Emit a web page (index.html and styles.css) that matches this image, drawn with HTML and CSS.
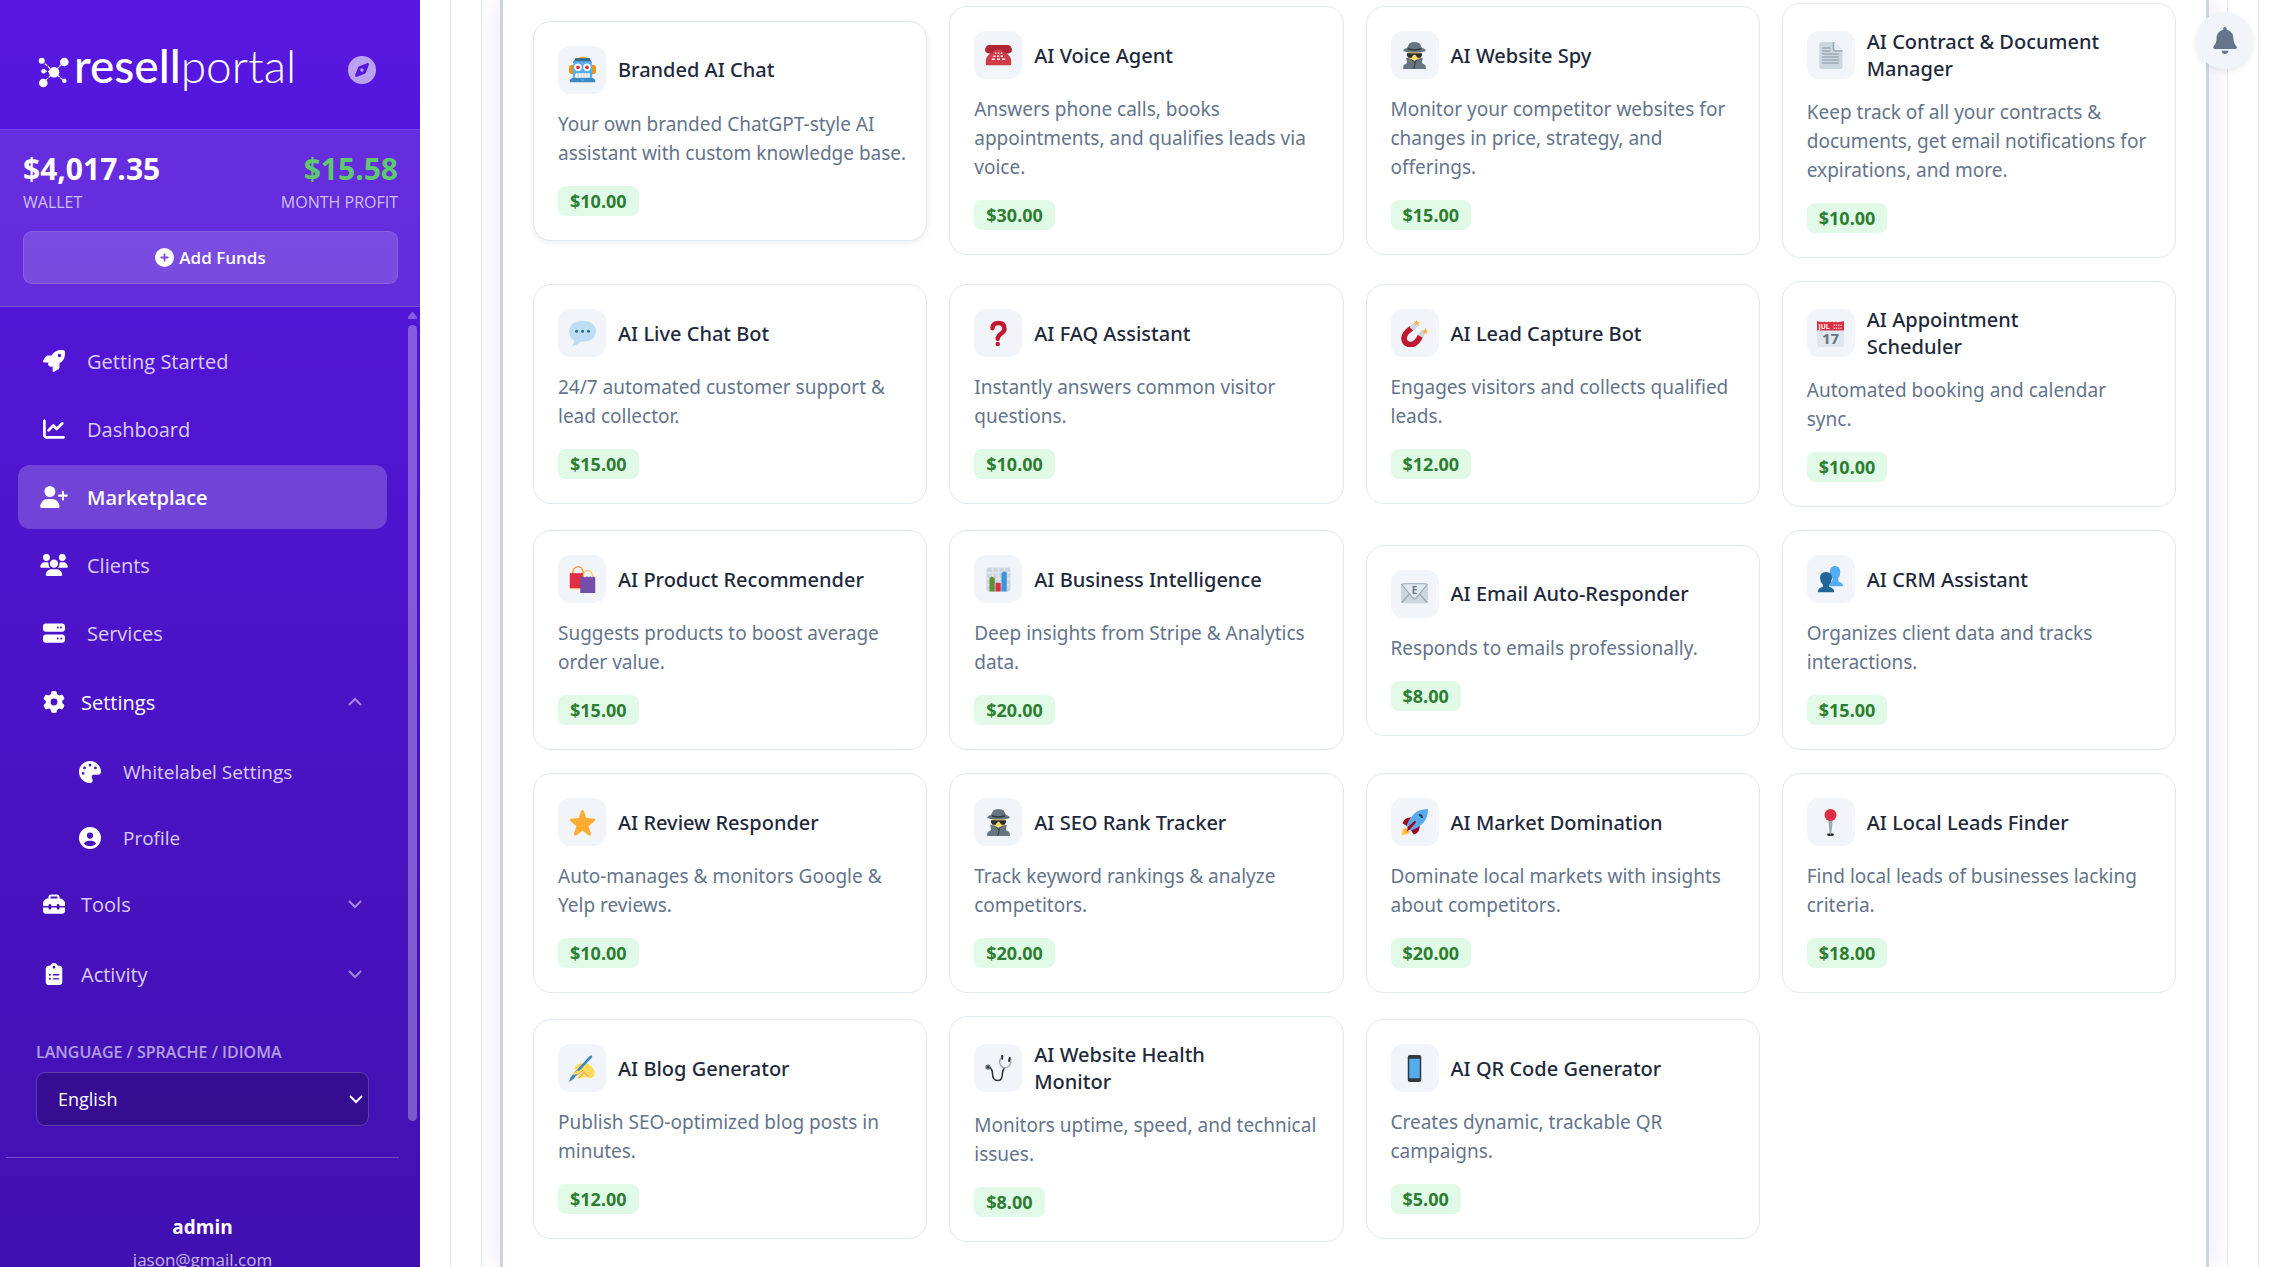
FILE: index.html
```
<!DOCTYPE html>
<html lang="en">
<head>
    <meta charset="UTF-8">
    <meta name="viewport" content="width=device-width, initial-scale=1.0">
    <title>Marketplace</title>
    <link rel="stylesheet" href="styles.css">
</head>
<body>

    <!-- emoji symbols used by the product cards -->
    <svg class="sprite" aria-hidden="true">
        <symbol id="e-robot" viewBox="0 0 36 36">
            <path fill="#f4900c" d="M1 13q-1 1-1 3v4q0 3 2 4h4V12H3zM35 13q1 1 1 3v4q0 3-2 4h-4V12h3z"/>
            <path fill="#ffac33" d="M8 7Q10 1 18 1t10 6z"/>
            <path fill="#66757f" d="M8 4h20l3 5H5z"/>
            <path fill="#55acee" d="M6 7h24l1 10v12H5V17z"/>
            <path fill="#3b88c3" d="M1 35v-2q1-4 6-4h22q5 0 6 4v2z"/>
            <path fill="#269" d="M8 3h20v3H8z"/>
            <circle cx="12" cy="15" r="5" fill="#fff"/><circle cx="24" cy="15" r="5" fill="#fff"/>
            <circle cx="12" cy="15" r="2.5" fill="#dd2e44"/><circle cx="24" cy="15" r="2.5" fill="#dd2e44"/>
            <rect x="8" y="23" width="20" height="6" rx="2" fill="#fff"/>
            <path stroke="#99aab5" d="M12 23v6M16 23v6M20 23v6M24 23v6"/>
            <path fill="#55acee" d="M15 31h6l-3 3z"/>
        </symbol>
        <symbol id="e-phone" viewBox="0 0 36 36">
            <path fill="#d03b48" d="M11 9h14q3 6 7 9 3 3 3 8v3q0 2-2 2H3q-2 0-2-2v-3q0-5 3-8 4-3 7-9z"/>
            <path fill="#b02634" d="M5 4h26q4 1 5 6 0 4-4 5-5 1-7-2-1-3-4-3h-6q-3 0-4 3-2 3-7 2-4-1-4-5Q1 5 5 4z"/>
            <path fill="#b02634" d="M12 6h2v6h-2zM22 6h2v6h-2z"/>
            <path fill="#fff" d="M13 14h2v2h-2zM17 14h2v2h-2zM21 14h2v2h-2zM11 18h3v2h-3zM16 18h3v2h-3zM21 18h3v2h-3zM9 22h4v2H9zM16 22h4v2h-4zM23 22h4v2h-4z"/>
        </symbol>
        <symbol id="e-spy" viewBox="0 0 36 36">
            <path fill="#ffdc5d" d="M9 10h18v9l-3 6H12l-3-6z"/>
            <path fill="#66757f" d="M3 36v-3q0-3 4-4l1-2-1-6q5 0 11 4 6-4 11-4l-1 6 1 2q4 1 4 4v3z"/>
            <path fill="none" stroke="#31373d" stroke-width="1.2" d="M15 24l4 4-2 8M21 24l-3 4"/>
            <path fill="#66757f" d="M3 12q0-3 5-4l3-6q2-2 7-2t7 2l3 6q5 1 5 4-5 2-15 2T3 12z"/>
            <path fill="#31373d" d="M9 8q9 3 18 0v2q-9 3-18 0z"/>
            <path fill="#292f33" d="M8 15h20v3l-2 3h-4l-3-4h-2l-3 4h-4l-2-3z"/>
        </symbol>
        <symbol id="e-page" viewBox="0 0 36 36">
            <path fill="#ccd6dd" d="M3 3q0-3 3-3h17l11 11v22q0 3-3 3H6q-3 0-3-3z"/>
            <path fill="#e8eef3" d="M22 0l12 12H24q-2 0-2-2z"/>
            <path stroke="#99aab5" stroke-width="2" d="M7 8h11M7 12h11M7 16h22M7 20h22M7 24h22M7 28h22M22 0v9q0 3 3 3h9" fill="none"/>
        </symbol>
        <symbol id="e-speech" viewBox="0 0 36 36">
            <path fill="#bdddf4" d="M18 1c10 0 18 5 18 14s-8 14-18 14l-3 0c-2 3-6 5-12 6 3-2 4-5 4-8-4-2-7-6-7-12C0 6 8 1 18 1z"/>
            <circle cx="10" cy="15" r="2" fill="#2a6797"/><circle cx="18" cy="15" r="2" fill="#2a6797"/><circle cx="26" cy="15" r="2" fill="#2a6797"/>
        </symbol>
        <symbol id="e-question" viewBox="0 0 36 36">
            <path fill="none" stroke="#be1931" stroke-width="6" stroke-linecap="round" d="M10 11q0-7 8-7 8 0 8 8c0 6-9 6-9 13"/>
            <circle cx="17" cy="32" r="3" fill="#be1931"/>
        </symbol>
        <symbol id="e-magnet" viewBox="0 0 36 36">
            <path fill="none" stroke="#be1931" stroke-width="7.5" d="M14 11q-9 6-10 13 0 8 9 9 8-1 13-12"/>
            <path fill="none" stroke="#ccd6dd" stroke-width="7" d="M14 12l6-6M26 22l4-7"/>
            <path fill="#ffac33" d="M21 0l1 3 3 0-2 2 1 3-3-2-2 1 0-3-2-2h3zM33 11l1 3h2l-2 2 1 3-3-2-2 2v-3l-2-2h3z"/>
        </symbol>
        <symbol id="e-bags" viewBox="0 0 36 36">
            <path fill="none" stroke="#f4900c" stroke-width="1.6" d="M5 11q0-10 7-10t7 10"/>
            <path fill="#dd2e44" d="M1 9l2 1 2-1 2 1 2-1 2 1 2-1 2 1 2-1 2 1v20H1z"/>
            <path fill="#ffcc4d" d="M1 30h14v1H1z"/>
            <path fill="none" stroke="#ffcc4d" stroke-width="1.6" d="M19 16q0-10 6-10t7 10"/>
            <path fill="#744eaa" d="M15 14l2 1 2-1 2 1 3-1 2 1 3-1 2 1 2-1 2 1v21H15z"/>
        </symbol>
        <symbol id="e-chart" viewBox="0 0 36 36">
            <rect x="2" y="2" width="32" height="32" rx="3" fill="#ccd6dd"/>
            <path stroke="#e1e8ed" stroke-width="2" d="M2 9h32M2 17h32M2 25h32M10 2v32M18 2v32M26 2v32"/>
            <path fill="#5c913b" d="M6 34V16l3-2 4 2v18z"/>
            <path fill="#dd2e44" d="M14 34V23l3-1 4 1v11z"/>
            <path fill="#3b94d9" d="M22 34V9l4-2 3 2v25z"/>
        </symbol>
        <symbol id="e-people" viewBox="0 0 36 36">
            <path fill="#55acee" d="M14 27q1-5 6-6l1-4q-4-3-4-9 0-8 7-8t7 8q0 6-3 9l1 4q5 1 6 6z"/>
            <path fill="#269" d="M1 35q0-6 7-7l0-3q-4-4-4-9 0-8 8-8t8 8q0 5-4 9v3q7 1 7 7z"/>
        </symbol>
        <symbol id="e-star" viewBox="0 0 36 36">
            <path fill="#ffac33" d="M18 1q1 0 2 2l3 9 10 1q2 0 2 1 0 2-2 3l-7 6 3 9q1 2 0 3-1 1-3 0l-8-6-8 6q-2 1-3 0-1-1 0-3l3-9-7-6q-2-1-2-3 0-1 2-1l10-1 3-9q1-2 2-2z"/>
        </symbol>
        <symbol id="e-rocket" viewBox="0 0 36 36">
            <path fill="#ffcc4d" d="M1 35q0-7 4-11l7 7q-4 4-11 4z"/>
            <path fill="#ffac33" d="M4 32q0-5 2-7l5 5q-2 2-7 2z"/>
            <path fill="#a0041e" d="M2 19q2-8 12-8l-6 12zM17 34q8-2 8-12l-12 6z"/>
            <path fill="#55acee" d="M36 0q-14 0-21 9-5 6-8 14l6 6q8-3 14-8 9-7 9-21z"/>
            <path fill="none" stroke="#292f33" stroke-width="2.5" d="M24 8q4 0 4 4"/>
            <path fill="#a0041e" d="M9 24l9-8q2-1 2 2l-8 9-4 3z"/>
        </symbol>
        <symbol id="e-pin" viewBox="0 0 36 36">
            <ellipse cx="18" cy="34" rx="4.5" ry="2" fill="#292f33"/>
            <path fill="#99aab5" d="M15 14h6l-2 20h-2z"/>
            <circle cx="18" cy="8" r="8" fill="#dd2e44"/>
        </symbol>
        <symbol id="e-writing" viewBox="0 0 36 36">
            <path fill="#4289c1" d="M0 36l2-6 12-15 3 3L6 32z"/>
            <path fill="#ffdc5d" d="M7 20q1-8 9-9 6-2 11 2 8 5 7 13-1 5-7 5l-7-2q-6 4-9 1l7-8q-9 5-13 4 0-2 7-6-5 1-5 0z"/>
            <path fill="none" stroke="#ef9645" stroke-width="1.3" d="M9 28l10-8M13 31l7-8q2 4 6 5"/>
            <path fill="#4289c1" d="M11 19L28 1q3-2 3 2L16 19l-4 3z"/>
        </symbol>
        <symbol id="e-steth" viewBox="0 0 36 36">
            <path fill="none" stroke="#292f33" stroke-width="2" d="M5 16q5 2 5 9 0 9 7 9 6 0 6-8 0-5 3-9"/>
            <path fill="none" stroke="#99aab5" stroke-width="2" d="M23 2q-5 5-3 10 2 5 6 5 7 0 8-6 1-4-1-7"/>
            <path stroke="#292f33" stroke-width="2.6" stroke-linecap="round" d="M23 1v4M33 4l-1 4"/>
            <circle cx="4" cy="16" r="3.5" fill="#66757f"/><circle cx="4" cy="16" r="1.5" fill="#292f33"/>
        </symbol>
        <symbol id="e-mobile" viewBox="0 0 36 36">
            <rect x="9" width="18" height="36" rx="3" fill="#31373d"/>
            <path fill="#55acee" d="M11 5h14v26H11z"/>
        </symbol>
    </svg>

    <aside class="sidebar">
        <header class="brand">
            <a class="logo" href="#" aria-label="resellportal">
                <svg class="logo-mark" viewBox="0 0 32 34">
                    <path fill="none" stroke="#fff" stroke-width="1.2" stroke-dasharray="3 1" d="M4 5l12 11L26 6M6 15l10 1M5 27l11-11 10 9"/>
                    <circle cx="16" cy="16.3" r="5.3"/><circle cx="3.7" cy="4.7" r="3"/><circle cx="26.3" cy="6" r="4.3"/>
                    <circle cx="5.6" cy="15.3" r="2.3"/><circle cx="5.3" cy="27" r="4.3"/><circle cx="26.3" cy="24.7" r="2.3"/>
                </svg>
                <span class="logo-text"><b>resell</b>portal</span>
            </a>
            <button class="compass" type="button" aria-label="Tour">
                <svg viewBox="0 0 512 512"><path d="M256 512A256 256 0 1 0 256 0a256 256 0 1 0 0 512zm50.7-186.9L162.4 380.6c-19.4 7.5-38.5-11.6-31-31l55.5-144.3c3.3-8.5 9.9-15.1 18.4-18.4l144.3-55.5c19.4-7.5 38.5 11.6 31 31L325.1 306.7c-3.3 8.5-9.9 15.1-18.4 18.4zM288 256a32 32 0 1 0 -64 0 32 32 0 1 0 64 0z"/></svg>
            </button>
        </header>

        <section class="wallet">
            <div class="wallet-row">
                <div>
                    <div class="amount">$4,017.35</div>
                    <div class="amount-label">WALLET</div>
                </div>
                <div class="profit">
                    <div class="amount">$15.58</div>
                    <div class="amount-label">MONTH PROFIT</div>
                </div>
            </div>
            <button class="add-funds" type="button">
                <svg viewBox="0 0 512 512"><path d="M256 512A256 256 0 1 0 256 0a256 256 0 1 0 0 512zM232 344V280H168c-13.3 0-24-10.7-24-24s10.7-24 24-24h64V168c0-13.3 10.7-24 24-24s24 10.7 24 24v64h64c13.3 0 24 10.7 24 24s-10.7 24-24 24H280v64c0 13.3-10.7 24-24 24s-24-10.7-24-24z"/></svg>
                Add Funds
            </button>
        </section>

        <div class="side-body">
            <div class="side-content">
                <nav class="menu">
                    <a class="menu-link" href="#">
                        <svg class="icon" viewBox="0 0 512 512"><path d="M156.6 384.9L125.7 354c-8.5-8.5-11.5-20.8-7.7-32.2c3-8.9 7-20.5 11.8-33.8L24 288c-8.6 0-16.6-4.6-20.9-12.1s-4.2-16.7 .2-24.1l52.5-88.5c13-21.9 36.5-35.3 61.9-35.3l82.3 0c2.4-4 4.8-7.7 7.2-11.3C289.1-4.1 411.1-8.1 483.9 5.3c11.6 2.1 20.6 11.2 22.8 22.8c13.4 72.9 9.3 194.8-111.4 276.7c-3.5 2.4-7.3 4.8-11.3 7.2v82.3c0 25.4-13.4 49-35.3 61.9l-88.5 52.5c-7.4 4.4-16.6 4.5-24.1 .2s-12.1-12.2-12.1-20.9V380.8c-14.1 4.9-26.4 8.9-35.7 11.9c-11.2 3.6-23.4 .5-31.8-7.8zM384 168a40 40 0 1 0 0-80 40 40 0 1 0 0 80z"/></svg>
                        <span>Getting Started</span>
                    </a>
                    <a class="menu-link" href="#">
                        <svg class="icon" viewBox="0 0 512 512"><path d="M64 64c0-17.7-14.3-32-32-32S0 46.3 0 64V400c0 44.2 35.8 80 80 80H480c17.7 0 32-14.3 32-32s-14.3-32-32-32H80c-8.8 0-16-7.2-16-16V64zm406.6 86.6c12.5-12.5 12.5-32.8 0-45.3s-32.8-12.5-45.3 0L320 210.7l-57.4-57.4c-12.5-12.5-32.8-12.5-45.3 0l-112 112c-12.5 12.5-12.5 32.8 0 45.3s32.8 12.5 45.3 0L240 221.3l57.4 57.4c12.5 12.5 32.8 12.5 45.3 0l128-128z"/></svg>
                        <span>Dashboard</span>
                    </a>
                    <a class="menu-link active" href="#">
                        <svg class="icon" viewBox="0 0 640 512"><path d="M96 128a128 128 0 1 1 256 0A128 128 0 1 1 96 128zM0 482.3C0 383.8 79.8 304 178.3 304h91.4C368.2 304 448 383.8 448 482.3c0 16.4-13.3 29.7-29.7 29.7H29.7C13.3 512 0 498.7 0 482.3zM504 312V248H440c-13.3 0-24-10.7-24-24s10.7-24 24-24h64V136c0-13.3 10.7-24 24-24s24 10.7 24 24v64h64c13.3 0 24 10.7 24 24s-10.7 24-24 24H552v64c0 13.3-10.7 24-24 24s-24-10.7-24-24z"/></svg>
                        <span>Marketplace</span>
                    </a>
                    <a class="menu-link" href="#">
                        <svg class="icon" viewBox="0 0 640 512"><path d="M144 0a80 80 0 1 1 0 160A80 80 0 1 1 144 0zM512 0a80 80 0 1 1 0 160A80 80 0 1 1 512 0zM0 298.7C0 239.8 47.8 192 106.7 192h42.7c15.9 0 31 3.5 44.6 9.7c-1.3 7.2-1.9 14.7-1.9 22.3c0 38.2 16.8 72.5 43.3 96c-.2 0-.4 0-.7 0H21.3C9.6 320 0 310.4 0 298.7zM405.3 320c-.2 0-.4 0-.7 0c26.6-23.5 43.3-57.8 43.3-96c0-7.6-.7-15-1.9-22.3c13.6-6.3 28.7-9.7 44.6-9.7h42.7C592.2 192 640 239.8 640 298.7c0 11.8-9.6 21.3-21.3 21.3H405.3zM224 224a96 96 0 1 1 192 0 96 96 0 1 1 -192 0zM128 485.3C128 411.7 187.7 352 261.3 352H378.7C452.3 352 512 411.7 512 485.3c0 14.7-11.9 26.7-26.7 26.7H154.7c-14.7 0-26.7-11.9-26.7-26.7z"/></svg>
                        <span>Clients</span>
                    </a>
                    <a class="menu-link" href="#">
                        <svg class="icon" viewBox="0 0 512 512"><path d="M64 32C28.7 32 0 60.7 0 96v64c0 35.3 28.7 64 64 64H448c35.3 0 64-28.7 64-64V96c0-35.3-28.7-64-64-64H64zm280 72a24 24 0 1 1 0 48 24 24 0 1 1 0-48zm48 24a24 24 0 1 1 48 0 24 24 0 1 1 -48 0zM64 288c-35.3 0-64 28.7-64 64v64c0 35.3 28.7 64 64 64H448c35.3 0 64-28.7 64-64V352c0-35.3-28.7-64-64-64H64zm280 72a24 24 0 1 1 0 48 24 24 0 1 1 0-48zm56 24a24 24 0 1 1 48 0 24 24 0 1 1 -48 0z"/></svg>
                        <span>Services</span>
                    </a>

                    <button class="menu-group open" type="button">
                        <svg class="icon" viewBox="0 0 512 512"><path d="M495.9 166.6c3.2 8.7 .5 18.4-6.4 24.6l-43.3 39.4c1.1 8.3 1.7 16.8 1.7 25.4s-.6 17.1-1.7 25.4l43.3 39.4c6.9 6.2 9.6 15.9 6.4 24.6c-4.4 11.9-9.7 23.3-15.8 34.3l-4.7 8.1c-6.6 11-14 21.4-22.1 31.2c-5.9 7.2-15.7 9.6-24.5 6.8l-55.7-17.7c-13.4 10.3-28.2 18.9-44 25.4l-12.5 57.1c-2 9.1-9 16.3-18.2 17.8c-13.8 2.3-28 3.5-42.5 3.5s-28.7-1.2-42.5-3.5c-9.2-1.5-16.2-8.7-18.2-17.8l-12.5-57.1c-15.8-6.5-30.6-15.1-44-25.4L83.1 425.9c-8.8 2.8-18.6 .3-24.5-6.8c-8.1-9.8-15.5-20.2-22.1-31.2l-4.7-8.1c-6.1-11-11.4-22.4-15.8-34.3c-3.2-8.7-.5-18.4 6.4-24.6l43.3-39.4C64.6 273.1 64 264.6 64 256s.6-17.1 1.7-25.4L22.4 191.2c-6.9-6.2-9.6-15.9-6.4-24.6c4.4-11.9 9.7-23.3 15.8-34.3l4.7-8.1c6.6-11 14-21.4 22.1-31.2c5.9-7.2 15.7-9.6 24.5-6.8l55.7 17.7c13.4-10.3 28.2-18.9 44-25.4l12.5-57.1c2-9.1 9-16.3 18.2-17.8C227.3 1.2 241.5 0 256 0s28.7 1.2 42.5 3.5c9.2 1.5 16.2 8.7 18.2 17.8l12.5 57.1c15.8 6.5 30.6 15.1 44 25.4l55.7-17.7c8.8-2.8 18.6-.3 24.5 6.8c8.1 9.8 15.5 20.2 22.1 31.2l4.7 8.1c6.1 11 11.4 22.4 15.8 34.3zM256 336a80 80 0 1 0 0-160 80 80 0 1 0 0 160z"/></svg>
                        <span>Settings</span>
                        <svg class="chevron" viewBox="0 0 16 10"><path d="M2 8l6-6 6 6"/></svg>
                    </button>
                    <div class="submenu">
                        <a class="sub-link" href="#">
                            <svg class="icon" viewBox="0 0 512 512"><path d="M512 256c0 .9 0 1.8 0 2.7c-.4 36.5-33.6 61.3-70.1 61.3H344c-26.5 0-48 21.5-48 48c0 3.4 .4 6.7 1 9.9c2.1 10.2 6.5 20 10.8 29.9c6.1 13.8 12.1 27.5 12.1 42c0 31.8-21.6 60.7-53.4 62c-3.5 .1-7 .2-10.6 .2C114.6 512 0 397.4 0 256S114.6 0 256 0S512 114.6 512 256zM128 288a32 32 0 1 0 -64 0 32 32 0 1 0 64 0zm0-96a32 32 0 1 0 0-64 32 32 0 1 0 0 64zM288 96a32 32 0 1 0 -64 0 32 32 0 1 0 64 0zm96 96a32 32 0 1 0 0-64 32 32 0 1 0 0 64z"/></svg>
                            <span>Whitelabel Settings</span>
                        </a>
                        <a class="sub-link" href="#">
                            <svg class="icon" viewBox="0 0 512 512"><path d="M399 384.2C376.9 345.8 335.4 320 288 320H224c-47.4 0-88.9 25.8-111 64.2c35.2 39.2 86.2 63.8 143 63.8s107.8-24.7 143-63.8zM0 256a256 256 0 1 1 512 0A256 256 0 1 1 0 256zm256 16a72 72 0 1 0 0-144 72 72 0 1 0 0 144z"/></svg>
                            <span>Profile</span>
                        </a>
                    </div>
                    <button class="menu-group" type="button">
                        <svg class="icon" viewBox="0 0 512 512"><path d="M176 88v40H336V88c0-4.4-3.6-8-8-8H184c-4.4 0-8 3.6-8 8zm-48 40V88c0-30.9 25.1-56 56-56H328c30.9 0 56 25.1 56 56v40h28.1c12.7 0 24.9 5.1 33.9 14.1l51.9 51.9c9 9 14.1 21.2 14.1 33.9V304H384V288c0-17.7-14.3-32-32-32s-32 14.3-32 32v16H192V288c0-17.7-14.3-32-32-32s-32 14.3-32 32v16H0V227.9c0-12.7 5.1-24.9 14.1-33.9l51.9-51.9c9-9 21.2-14.1 33.9-14.1H128zM0 416V336H128v16c0 17.7 14.3 32 32 32s32-14.3 32-32V336H320v16c0 17.7 14.3 32 32 32s32-14.3 32-32V336H512v80c0 35.3-28.7 64-64 64H64c-35.3 0-64-28.7-64-64z"/></svg>
                        <span>Tools</span>
                        <svg class="chevron" viewBox="0 0 16 10"><path d="M2 2l6 6 6-6"/></svg>
                    </button>
                    <button class="menu-group" type="button">
                        <svg class="icon" viewBox="0 0 384 512"><path d="M192 0c-41.8 0-77.4 26.7-90.5 64H64C28.7 64 0 92.7 0 128V448c0 35.3 28.7 64 64 64H320c35.3 0 64-28.7 64-64V128c0-35.3-28.7-64-64-64H282.5C269.4 26.7 233.8 0 192 0zm0 64a32 32 0 1 1 0 64 32 32 0 1 1 0-64zM72 272a24 24 0 1 1 48 0 24 24 0 1 1 -48 0zm104-16H304c8.8 0 16 7.2 16 16s-7.2 16-16 16H176c-8.8 0-16-7.2-16-16s7.2-16 16-16zM72 368a24 24 0 1 1 48 0 24 24 0 1 1 -48 0zm88 0c0-8.8 7.2-16 16-16H304c8.8 0 16 7.2 16 16s-7.2 16-16 16H176c-8.8 0-16-7.2-16-16z"/></svg>
                        <span>Activity</span>
                        <svg class="chevron" viewBox="0 0 16 10"><path d="M2 2l6 6 6-6"/></svg>
                    </button>
                </nav>

                <div class="language">
                    <label for="language">LANGUAGE / SPRACHE / IDIOMA</label>
                    <div class="select-wrap">
                        <select id="language">
                            <option>English</option>
                            <option>Deutsch</option>
                            <option>Español</option>
                        </select>
                        <svg class="select-arrow" viewBox="0 0 16 10"><path d="M2 2l6 6 6-6"/></svg>
                    </div>
                </div>

                <div class="user">
                    <div class="user-name">admin</div>
                    <div class="user-mail">jason@gmail.com</div>
                </div>
            </div>
            <div class="scrollbar" aria-hidden="true">
                <svg viewBox="0 0 9 7"><path d="M4 0h1l4 5v2H0V5z"/></svg>
                <div class="track"><div class="thumb"></div></div>
            </div>
        </div>
    </aside>

    <main class="main">
        <div class="panel">
            <div class="panel-inner">
                <div class="group">
                    <div class="cards">
                        <article class="card selected">
                            <div class="card-head">
                                <span class="card-icon"><svg><use href="#e-robot"/></svg></span>
                                <h3>Branded AI Chat</h3>
                            </div>
                            <p>Your own branded ChatGPT-style AI assistant with custom knowledge base.</p>
                            <span class="price">$10.00</span>
                        </article>
                        <article class="card">
                            <div class="card-head">
                                <span class="card-icon"><svg><use href="#e-phone"/></svg></span>
                                <h3>AI Voice Agent</h3>
                            </div>
                            <p>Answers phone calls, books appointments, and qualifies leads via voice.</p>
                            <span class="price">$30.00</span>
                        </article>
                        <article class="card">
                            <div class="card-head">
                                <span class="card-icon"><svg><use href="#e-spy"/></svg></span>
                                <h3>AI Website Spy</h3>
                            </div>
                            <p>Monitor your competitor websites for changes in price, strategy, and offerings.</p>
                            <span class="price">$15.00</span>
                        </article>
                        <article class="card">
                            <div class="card-head">
                                <span class="card-icon"><svg><use href="#e-page"/></svg></span>
                                <h3>AI Contract &amp; Document Manager</h3>
                            </div>
                            <p>Keep track of all your contracts &amp; documents, get email notifications for expirations, and more.</p>
                            <span class="price">$10.00</span>
                        </article>

                        <article class="card">
                            <div class="card-head">
                                <span class="card-icon"><svg><use href="#e-speech"/></svg></span>
                                <h3>AI Live Chat Bot</h3>
                            </div>
                            <p>24/7 automated customer support &amp; lead collector.</p>
                            <span class="price">$15.00</span>
                        </article>
                        <article class="card">
                            <div class="card-head">
                                <span class="card-icon"><svg><use href="#e-question"/></svg></span>
                                <h3>AI FAQ Assistant</h3>
                            </div>
                            <p>Instantly answers common visitor questions.</p>
                            <span class="price">$10.00</span>
                        </article>
                        <article class="card">
                            <div class="card-head">
                                <span class="card-icon"><svg><use href="#e-magnet"/></svg></span>
                                <h3>AI Lead Capture Bot</h3>
                            </div>
                            <p>Engages visitors and collects qualified leads.</p>
                            <span class="price">$12.00</span>
                        </article>
                        <article class="card">
                            <div class="card-head">
                                <span class="card-icon">
                                    <svg viewBox="0 0 36 36">
                                        <path fill="#e0e7ec" d="M0 11h36v22q0 3-3 3H3q-3 0-3-3z"/>
                                        <path fill="#dd2e44" d="M0 14V1q2 2 5 1 3 2 5 0 3 2 5 0 3 2 5 0 3 2 5 0 3 2 6 0 3 1 5-1v13z"/>
                                        <text class="cal-month" x="2" y="12">JUL</text>
                                        <path stroke="#f4abba" stroke-width="2" stroke-dasharray="2 1" d="M22 7h11M22 11h11"/>
                                        <text class="cal-day" x="18" y="32" text-anchor="middle">17</text>
                                    </svg>
                                </span>
                                <h3>AI Appointment Scheduler</h3>
                            </div>
                            <p>Automated booking and calendar sync.</p>
                            <span class="price">$10.00</span>
                        </article>

                        <article class="card">
                            <div class="card-head">
                                <span class="card-icon"><svg><use href="#e-bags"/></svg></span>
                                <h3>AI Product Recommender</h3>
                            </div>
                            <p>Suggests products to boost average order value.</p>
                            <span class="price">$15.00</span>
                        </article>
                        <article class="card">
                            <div class="card-head">
                                <span class="card-icon"><svg><use href="#e-chart"/></svg></span>
                                <h3>AI Business Intelligence</h3>
                            </div>
                            <p>Deep insights from Stripe &amp; Analytics data.</p>
                            <span class="price">$20.00</span>
                        </article>
                        <article class="card">
                            <div class="card-head">
                                <span class="card-icon">
                                    <svg viewBox="0 0 36 36">
                                        <rect y="5" width="36" height="26" rx="3" fill="#ccd6dd"/>
                                        <path fill="none" stroke="#99aab5" stroke-width="2" d="M1 30l12-13M35 30L23 17"/>
                                        <path fill="#e1e8ed" stroke="#99aab5" stroke-width="1.5" d="M1 6q1-1 3-1h28q2 0 3 1L20 24q-2 2-4 0z"/>
                                        <text class="mail-e" x="18" y="18" text-anchor="middle">E</text>
                                    </svg>
                                </span>
                                <h3>AI Email Auto-Responder</h3>
                            </div>
                            <p>Responds to emails professionally.</p>
                            <span class="price">$8.00</span>
                        </article>
                        <article class="card">
                            <div class="card-head">
                                <span class="card-icon"><svg><use href="#e-people"/></svg></span>
                                <h3>AI CRM Assistant</h3>
                            </div>
                            <p>Organizes client data and tracks interactions.</p>
                            <span class="price">$15.00</span>
                        </article>

                        <article class="card">
                            <div class="card-head">
                                <span class="card-icon"><svg><use href="#e-star"/></svg></span>
                                <h3>AI Review Responder</h3>
                            </div>
                            <p>Auto-manages &amp; monitors Google &amp; Yelp reviews.</p>
                            <span class="price">$10.00</span>
                        </article>
                        <article class="card">
                            <div class="card-head">
                                <span class="card-icon"><svg><use href="#e-spy"/></svg></span>
                                <h3>AI SEO Rank Tracker</h3>
                            </div>
                            <p>Track keyword rankings &amp; analyze competitors.</p>
                            <span class="price">$20.00</span>
                        </article>
                        <article class="card">
                            <div class="card-head">
                                <span class="card-icon"><svg><use href="#e-rocket"/></svg></span>
                                <h3>AI Market Domination</h3>
                            </div>
                            <p>Dominate local markets with insights about competitors.</p>
                            <span class="price">$20.00</span>
                        </article>
                        <article class="card">
                            <div class="card-head">
                                <span class="card-icon"><svg><use href="#e-pin"/></svg></span>
                                <h3>AI Local Leads Finder</h3>
                            </div>
                            <p>Find local leads of businesses lacking criteria.</p>
                            <span class="price">$18.00</span>
                        </article>

                        <article class="card">
                            <div class="card-head">
                                <span class="card-icon"><svg><use href="#e-writing"/></svg></span>
                                <h3>AI Blog Generator</h3>
                            </div>
                            <p>Publish SEO-optimized blog posts in minutes.</p>
                            <span class="price">$12.00</span>
                        </article>
                        <article class="card">
                            <div class="card-head">
                                <span class="card-icon"><svg><use href="#e-steth"/></svg></span>
                                <h3>AI Website Health Monitor</h3>
                            </div>
                            <p>Monitors uptime, speed, and technical issues.</p>
                            <span class="price">$8.00</span>
                        </article>
                        <article class="card">
                            <div class="card-head">
                                <span class="card-icon"><svg><use href="#e-mobile"/></svg></span>
                                <h3>AI QR Code Generator</h3>
                            </div>
                            <p>Creates dynamic, trackable QR campaigns.</p>
                            <span class="price">$5.00</span>
                        </article>
                    </div>
                </div>
            </div>
        </div>
    </main>

    <button class="bell" type="button" aria-label="Notifications">
        <svg viewBox="0 0 448 512"><path d="M224 0c-17.7 0-32 14.3-32 32V51.2C119 66 64 130.6 64 208v18.8c0 47-17.3 92.4-48.5 127.6l-7.4 8.3c-8.4 9.4-10.4 22.9-5.3 34.4S19.4 416 32 416H416c12.6 0 24-7.4 29.2-18.9s3.1-25-5.3-34.4l-7.4-8.3C401.3 319.2 384 273.9 384 226.8V208c0-77.4-55-142-128-156.8V32c0-17.7-14.3-32-32-32zm45.3 493.3c12-12 18.7-28.3 18.7-45.3H224 160c0 17 6.7 33.3 18.7 45.3s28.3 18.7 45.3 18.7s33.3-6.7 45.3-18.7z"/></svg>
    </button>

</body>
</html>
```
FILE: styles.css
```
* {
    box-sizing: border-box;
}

body {
    margin: 0;
    display: flex;
    background: #fff;
    font-family: "Noto Sans", "Open Sans", sans-serif;
    color: #1e293b;
}

button,
select {
    font-family: inherit;
}

a {
    text-decoration: none;
}

.sprite {
    position: absolute;
    width: 0;
    height: 0;
}

/* Sidebar */
.sidebar {
    flex: 0 0 420px;
    height: 100vh;
    position: sticky;
    top: 0;
    overflow: hidden;
    display: flex;
    flex-direction: column;
    background: linear-gradient(180deg, #5717e1, #4110b0);
    color: #fff;
    font-family: "Open Sans", sans-serif;
}

.brand {
    flex: none;
    height: 130px;
    padding: 10px 44px 0 38px;
    display: flex;
    align-items: center;
    justify-content: space-between;
    border-bottom: 1px solid rgba(255, 255, 255, 0.2);
}

.logo {
    display: flex;
    align-items: center;
    gap: 4px;
    color: #fff;
}

.logo-mark {
    width: 32px;
    height: 34px;
    margin-top: 6px;
    fill: #fff;
}

.logo-text {
    padding-bottom: 8px;
    font-family: Lato, sans-serif;
    font-size: 46px;
    line-height: 56px;
    font-weight: 300;
}

.logo-text b {
    font-weight: 500;
}

.compass {
    padding: 0;
    border: none;
    background: none;
    height: 28px;
}

.compass svg {
    display: block;
    width: 28px;
    height: 28px;
    fill: #fff;
    opacity: 0.6;
}

.wallet {
    flex: none;
    padding: 18px 22px 22px 23px;
    background: rgba(255, 255, 255, 0.1);
    border-bottom: 1px solid rgba(255, 255, 255, 0.15);
}

.wallet-row {
    display: flex;
    justify-content: space-between;
    margin-bottom: 17px;
}

.profit {
    text-align: right;
}

.amount {
    font-size: 30px;
    line-height: 42px;
    font-weight: 700;
}

.profit .amount {
    color: #5fc96f;
}

.amount-label {
    font-size: 16px;
    line-height: 24px;
    color: rgba(255, 255, 255, 0.7);
}

.add-funds {
    width: 100%;
    height: 53px;
    display: flex;
    align-items: center;
    justify-content: center;
    gap: 5px;
    border: 1px solid rgba(255, 255, 255, 0.12);
    border-radius: 9px;
    background: rgba(255, 255, 255, 0.15);
    color: #fff;
    font-size: 17px;
    font-weight: 600;
}

.add-funds svg {
    width: 19px;
    height: 19px;
    fill: #fff;
}

.side-body {
    flex: 1;
    min-height: 0;
    display: flex;
}

.side-content {
    flex: 1;
    padding-top: 22px;
}

.menu {
    padding: 0 18px;
}

.menu-link,
.menu-group,
.sub-link {
    display: flex;
    align-items: center;
    color: rgba(255, 255, 255, 0.8);
    border-radius: 12px;
}

.menu-link {
    height: 64px;
    margin-bottom: 4px;
    padding-left: 22px;
    gap: 19px;
    font-size: 20px;
}

.menu-link.active {
    background: rgba(255, 255, 255, 0.2);
    color: #fff;
    font-weight: 600;
}

.icon {
    width: 28px;
    height: 22px;
    fill: #fff;
}

.menu-group {
    width: 100%;
    height: 66px;
    margin-bottom: 4px;
    padding: 0 24px 0 22px;
    gap: 13px;
    border: none;
    background: none;
    font-size: 20px;
}

.menu-group.open {
    color: #fff;
}

.chevron {
    width: 16px;
    height: 10px;
    margin-left: auto;
    fill: none;
    stroke: rgba(255, 255, 255, 0.5);
    stroke-width: 2;
}

.sub-link {
    height: 66px;
    padding-left: 58px;
    gap: 19px;
    font-size: 19px;
}

.language {
    margin: 33px 36px 0;
}

.language label {
    display: block;
    margin-bottom: 8px;
    font-size: 16px;
    line-height: 24px;
    font-weight: 600;
    color: rgba(255, 255, 255, 0.6);
}

.select-wrap {
    position: relative;
}

.select-wrap select {
    display: block;
    width: 100%;
    height: 54px;
    padding: 0 21px;
    appearance: none;
    border: 1px solid rgba(255, 255, 255, 0.2);
    border-radius: 9px;
    background: rgba(0, 0, 0, 0.2);
    color: #fff;
    font-size: 18px;
}

.select-arrow {
    position: absolute;
    top: 22px;
    right: 5px;
    width: 16px;
    height: 10px;
    fill: none;
    stroke: #fff;
    stroke-width: 2;
    pointer-events: none;
}

.user {
    margin: 31px 6px 0;
    padding-top: 55px;
    border-top: 1px solid rgba(255, 255, 255, 0.25);
    text-align: center;
}

.user-name {
    font-size: 19px;
    line-height: 28px;
    font-weight: 700;
}

.user-mail {
    margin-top: 7px;
    font-size: 17px;
    line-height: 24px;
    color: rgba(255, 255, 255, 0.7);
}

.scrollbar {
    flex: 0 0 15px;
    padding: 5px 3px;
    display: flex;
    flex-direction: column;
    gap: 6px;
}

.scrollbar svg {
    width: 9px;
    height: 7px;
    fill: rgba(255, 255, 255, 0.3);
}

.track {
    flex: 1;
}

.thumb {
    height: 85%;
    border-radius: 5px;
    background: rgba(255, 255, 255, 0.3);
}

/* Main area */
.main {
    flex: 1;
    min-width: 0;
    min-height: 100vh;
    padding: 0 25px 0 30px;
    display: flex;
}

.panel {
    flex: 1;
    padding: 0 30px;
    display: flex;
    border-left: 1px solid #e2e8f0;
    border-right: 1px solid #e2e8f0;
}

.panel-inner {
    flex: 1;
    padding: 0 18px;
    display: flex;
    overflow: hidden;
    border-left: 1px solid #e2e8f0;
    border-right: 1px solid #e2e8f0;
}

.group {
    flex: 1;
    padding: 3px 30px 26px;
    border-left: 3px solid #cbd5e1;
    border-right: 3px solid #cbd5e1;
    background: #fff;
    box-shadow: 0 0 30px rgba(124, 58, 237, 0.15);
}

.cards {
    display: grid;
    grid-template-columns: repeat(4, 1fr);
    gap: 23px 22px;
    align-items: center;
}

.card {
    padding: 24px 20px 24px 24px;
    border: 1px solid #e2e8f0;
    border-radius: 18px;
    background: #fff;
}

.card.selected {
    box-shadow: 0 2px 6px rgba(15, 23, 42, 0.08);
}

.card-head {
    display: flex;
    align-items: center;
    gap: 12px;
    padding-right: 40px;
}

.card-icon {
    flex: none;
    width: 48px;
    height: 48px;
    display: flex;
    align-items: center;
    justify-content: center;
    border-radius: 12px;
    background: #f1f5f9;
}

.card-icon svg {
    width: 27px;
    height: 27px;
}

.cal-month {
    font: 700 9px "Open Sans", sans-serif;
    fill: #fff;
}

.cal-day {
    font: 700 20px "Open Sans", sans-serif;
    fill: #66757f;
}

.mail-e {
    font: 700 13px "Open Sans", sans-serif;
    fill: #66757f;
}

.card h3 {
    margin: 0;
    font-size: 20px;
    line-height: 27px;
    font-weight: 500;
}

.card p {
    margin: 16px 0 18px;
    font-size: 19px;
    line-height: 29px;
    color: #64748b;
}

.price {
    display: block;
    width: fit-content;
    padding: 0 12px;
    border-radius: 8px;
    background: #e0fae7;
    color: #2e7d32;
    font-size: 18px;
    line-height: 30px;
    font-weight: 700;
}

.bell {
    position: fixed;
    top: 12px;
    right: 31px;
    width: 57px;
    height: 57px;
    padding: 0;
    display: flex;
    align-items: center;
    justify-content: center;
    border: none;
    border-radius: 50%;
    background: #f1f5f9;
    box-shadow: 0 3px 6px rgba(0, 0, 0, 0.08);
}

.bell svg {
    width: 24px;
    height: 27px;
    fill: #64748b;
}
```
